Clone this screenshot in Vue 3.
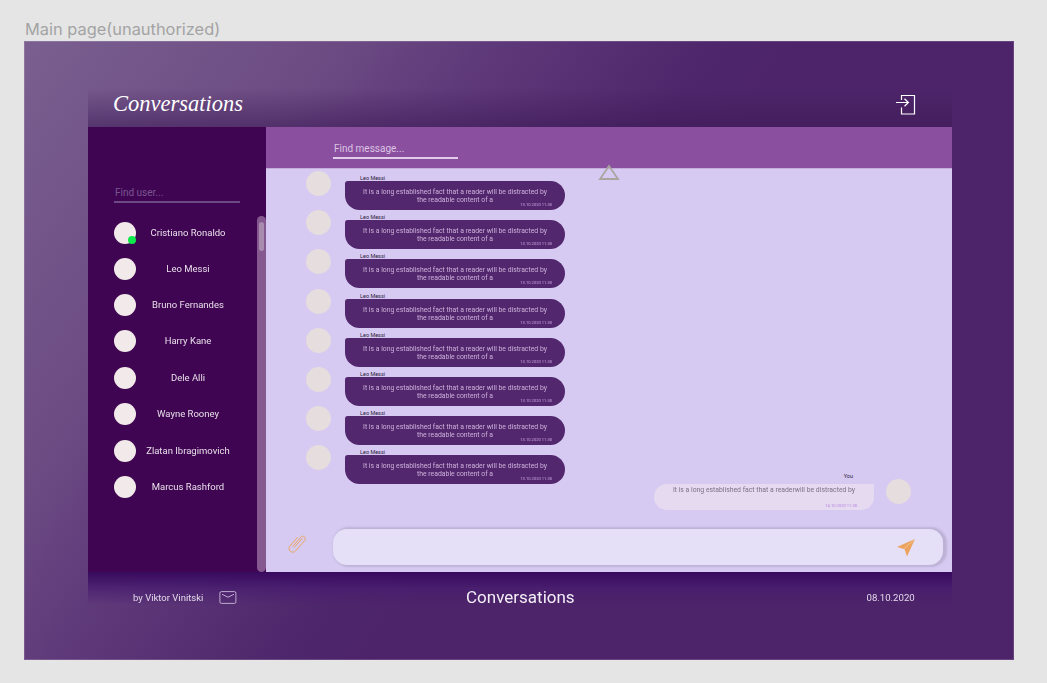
<template>
  <div class="page">
    <div class="page-label">Main page(unauthorized)</div>
    <div class="frame">
      <header class="top">
        <div class="logo">Conversations</div>
        <button class="icon-btn">
          <svg width="20" height="21" viewBox="0 0 20 21" fill="none" stroke="#fff" stroke-width="1.2">
            <path d="M5.5 6V1.5H18.5V20H5.5V13.5" />
            <path d="M0 8.5H12M8.5 4.8L12.4 8.5L8.5 12.2" />
          </svg>
        </button>
      </header>

      <main class="app">
        <aside class="sidebar">
          <input class="find-user" placeholder="Find user..." />
          <ul class="users">
            <li v-for="user in users" :key="user.name" class="user">
              <span class="user-avatar">
                <span v-if="user.online" class="online"></span>
              </span>
              <span class="user-name">{{ user.name }}</span>
            </li>
          </ul>
          <div class="scrollbar"><div class="scroll-thumb"></div></div>
        </aside>

        <section class="chat">
          <div class="chat-bar">
            <input class="find-message" placeholder="Find message..." />
          </div>
          <svg class="scroll-up" width="22" height="17" viewBox="0 0 22 17" fill="none" stroke="#a9a69f" stroke-width="1.8">
            <path d="M11 2L20 15H2Z" />
          </svg>

          <div class="messages">
            <div v-for="n in 8" :key="n" class="msg">
              <div class="msg-avatar"></div>
              <div>
                <div class="msg-name">Leo Messi</div>
                <div class="bubble">
                  <p>It is a long established fact that a reader will be distracted by the readable content of a</p>
                  <span class="time">13.10.2020 11:30</span>
                </div>
              </div>
            </div>
            <div class="msg-own">
              <div>
                <div class="own-name">You</div>
                <div class="bubble-own">
                  <p>It is a long established fact that a readerwill be distracted by</p>
                  <span class="time-own">14.10.2020 11:30</span>
                </div>
              </div>
              <div class="msg-avatar own-avatar"></div>
            </div>
          </div>

          <div class="composer">
            <svg class="clip" width="18" height="18" viewBox="0 0 18 18" fill="none" stroke="#eba662" stroke-width="1">
              <path d="M4.6 11.6L12.6 2.3C13.6 1 15.4 0.9 16.5 1.9C17.6 3 17.5 4.6 16.5 5.8L7.6 15.9C6.2 17.5 3.8 17.6 2.2 16.2C0.7 14.8 0.6 12.6 2 11L9.6 2.2" />
              <path d="M6.4 12.4L14.4 3.2" />
            </svg>
            <div class="composer-input">
              <svg width="18" height="18" viewBox="0 0 18 18">
                <path d="M0 8L18 0L10 17.5L7.6 10.2Z" fill="#eba35e" />
                <path d="M17.4 0.6L7 9.6" stroke="#f7d3a8" stroke-width="0.7" />
              </svg>
            </div>
          </div>
        </section>
      </main>

      <footer class="bottom">
        <div class="author">
          <span class="soft">by Viktor Vinitski</span>
          <svg width="18" height="13" viewBox="0 0 18 13" fill="none" stroke="#d9cde3" stroke-width="0.8">
            <rect x="0.9" y="0.6" width="16" height="11.8" rx="1.5" />
            <path d="M3 3.3L9 6.2L15 3.3" />
          </svg>
        </div>
        <div class="bottom-title soft">Conversations</div>
        <div class="date soft">08.10.2020</div>
      </footer>
    </div>
  </div>
</template>

<script setup>
const users = [
  { name: 'Cristiano Ronaldo', online: true },
  { name: 'Leo Messi' },
  { name: 'Bruno Fernandes' },
  { name: 'Harry Kane' },
  { name: 'Dele Alli' },
  { name: 'Wayne Rooney' },
  { name: 'Zlatan Ibragimovich' },
  { name: 'Marcus Rashford' }
]
</script>

<style>
html, body {
  margin: 0;
  background: #e5e5e5;
}
</style>

<style scoped>
.page {
  width: 1047px;
  height: 683px;
  padding: 18px 33px 23px 24px;
  box-sizing: border-box;
  overflow: hidden;
  background: #e5e5e5;
  font-family: Roboto, "Liberation Sans", sans-serif;
}
.soft {
  will-change: transform;
}
.page-label {
  height: 23px;
  padding-left: 1px;
  font-family: Inter, "Liberation Sans", sans-serif;
  font-size: 16.4px;
  line-height: 22px;
  color: #a3a3a3;
}
.frame {
  width: 990px;
  height: 619px;
  box-sizing: border-box;
  padding: 47px 62px 55px 64px;
  display: flex;
  flex-direction: column;
  background: linear-gradient(125deg, #7a5f90 0%, #6c4b83 22%, #5f3a7a 32.5%, #4e266b 48.6%, #4d2469 55%, #4d2469 100%);
  box-shadow: inset 0 0 0 1px rgba(255, 255, 255, 0.15);
}
.top {
  flex: none;
  height: 39px;
  padding: 0 36px 7px 25px;
  box-sizing: border-box;
  display: flex;
  align-items: center;
  justify-content: space-between;
  background: linear-gradient(180deg, rgba(60, 20, 85, 0) 0%, rgba(60, 25, 85, 0.55) 100%);
}
.logo {
  font-family: "Liberation Serif", serif;
  font-style: italic;
  font-size: 22.5px;
  line-height: 30px;
  color: #fff;
}
.icon-btn {
  padding: 0;
  border: 0;
  background: none;
  display: flex;
}
.app {
  flex: none;
  height: 445px;
  display: flex;
}
.sidebar {
  position: relative;
  flex: none;
  width: 178px;
  box-sizing: border-box;
  padding: 59px 26px 0;
  background: #3f0552;
}
.find-user {
  display: block;
  width: 126px;
  height: 17px;
  box-sizing: border-box;
  padding: 0 0 2px 1px;
  border: 0;
  border-bottom: 2px solid #6e4a85;
  background: none;
  outline: none;
  font-family: inherit;
  font-size: 10px;
}
.find-user::placeholder {
  color: #7b5590;
}
.users {
  list-style: none;
  margin: 19px 0 0;
  padding: 0;
  display: flex;
  flex-direction: column;
  gap: 14px;
}
.user {
  display: flex;
  align-items: center;
  height: 22px;
}
.user:nth-child(5),
.user:nth-child(7) {
  margin-top: 1px;
}
.user-avatar {
  position: relative;
  flex: none;
  width: 22px;
  height: 22px;
  border-radius: 50%;
  background: #f2eaea;
}
.online {
  position: absolute;
  right: 0;
  bottom: 0;
  width: 8px;
  height: 8px;
  border-radius: 50%;
  background: #0de84a;
}
.user-name {
  flex: 1;
  padding-bottom: 2px;
  text-align: center;
  font-size: 9.5px;
  color: #e8dfea;
  will-change: transform;
}
.scrollbar {
  position: absolute;
  right: 0;
  top: 89px;
  bottom: 0;
  width: 9px;
  border-radius: 5px;
  background: #85588f;
}
.scroll-thumb {
  width: 5px;
  height: 29px;
  margin: 6px 0 0 2px;
  border-radius: 3px;
  background: #a98cb0;
}
.chat {
  position: relative;
  flex: 1;
  display: flex;
  flex-direction: column;
  background: #d6caf2;
}
.chat-bar {
  flex: none;
  height: 42px;
  box-sizing: border-box;
  padding: 14px 0 0 67px;
  background: #8b4f9f;
  border-bottom: 1px solid #c5aedb;
}
.find-message {
  display: block;
  width: 125px;
  height: 18px;
  box-sizing: border-box;
  padding: 0 0 2px 1px;
  border: 0;
  border-bottom: 2px solid #e3cdea;
  background: none;
  outline: none;
  font-family: inherit;
  font-size: 10px;
}
.find-message::placeholder {
  color: #dcc5e4;
}
.scroll-up {
  position: absolute;
  left: 332px;
  top: 37px;
}
.messages {
  flex: 1;
  min-height: 0;
  padding-top: 2px;
}
.msg {
  display: flex;
  height: 39.2px;
  padding-left: 40px;
  gap: 14px;
}
.msg-avatar {
  flex: none;
  width: 25px;
  height: 25px;
  border-radius: 50%;
  background: #e5ddde;
}
.msg-name {
  height: 8px;
  padding: 2px 0 0 15px;
  font-size: 5.5px;
  line-height: 10px;
  color: #2d1a3d;
}
.bubble {
  position: relative;
  width: 220px;
  height: 29px;
  box-sizing: border-box;
  padding: 7px 14px 0;
  border-radius: 3px 16px 16px 16px;
  background: #53276e;
}
.bubble p {
  margin: 0;
  text-align: center;
  font-size: 6.85px;
  line-height: 8px;
  color: #cbb1d9;
  will-change: transform;
}
.time {
  position: absolute;
  right: 13px;
  bottom: 2px;
  font-size: 4.1px;
  line-height: 6px;
  color: #c9a8e0;
}
.msg-own {
  display: flex;
  justify-content: flex-end;
  gap: 12px;
  margin-top: -12.6px;
  padding-right: 41px;
}
.own-name {
  height: 12px;
  padding-right: 21px;
  text-align: right;
  font-size: 5.5px;
  line-height: 8px;
  color: #2d1a3d;
}
.bubble-own {
  position: relative;
  width: 220px;
  height: 26px;
  box-sizing: border-box;
  padding-top: 2px;
  border-radius: 16px 0 16px 16px;
  background: #e6daf0;
}
.bubble-own p {
  margin: 0;
  text-align: center;
  font-size: 6.85px;
  line-height: 8px;
  color: #7b7186;
  will-change: transform;
}
.time-own {
  position: absolute;
  right: 17px;
  bottom: 1px;
  font-size: 4.1px;
  line-height: 6px;
  color: #b784e0;
}
.own-avatar {
  margin-top: 7px;
}
.composer {
  flex: none;
  display: flex;
  align-items: center;
  gap: 27px;
  padding: 0 9px 7px 22px;
}
.clip {
  flex: none;
  margin-bottom: 6px;
}
.composer-input {
  flex: 1;
  height: 36px;
  box-sizing: border-box;
  padding: 1px 28px 0 0;
  display: flex;
  align-items: center;
  justify-content: flex-end;
  border-radius: 14px;
  background: #e5dff7;
  box-shadow: 2px 0 2px 2px #bdb2d6;
}
.bottom {
  flex: none;
  height: 33px;
  box-sizing: border-box;
  padding: 18px 37px 0;
  display: grid;
  grid-template-columns: 1fr auto 1fr;
  align-items: center;
  background: linear-gradient(180deg, #380a5e 0%, rgba(72, 28, 112, 0.75) 50%, rgba(77, 36, 105, 0) 100%);
}
.author {
  display: flex;
  align-items: center;
  gap: 16px;
  height: 15px;
  padding-left: 8px;
  font-size: 9.5px;
  color: #e3d9ea;
}
.bottom-title {
  font-size: 17px;
  line-height: 15px;
  color: #f3eef6;
}
.date {
  text-align: right;
  font-size: 9.6px;
  line-height: 15px;
  color: #e3d9ea;
}
</style>
